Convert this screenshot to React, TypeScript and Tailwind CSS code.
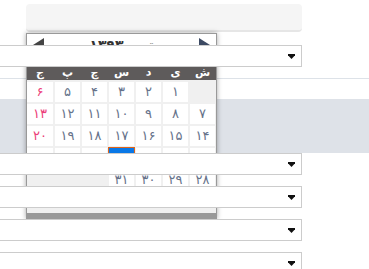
import React from 'react';

const fa = (n: number) => String(n).replace(/\d/g, (d) => '۰۱۲۳۴۵۶۷۸۹'[+d]);

// left to right: جمعه ... شنبه
const dayNames = ['ج', 'پ', 'چ', 'س', 'د', 'ی', 'ش'];

function Caret() {
  return (
    <svg width="7" height="5" viewBox="0 0 7 5" className="shrink-0">
      <path d="M0 0h7v1.2L3.5 5 0 1.2z" fill="#111" />
    </svg>
  );
}

function SelectBox({ className = '' }: { className?: string }) {
  return (
    <div
      className={`relative z-20 ml-[-4px] flex h-[22px] w-[306px] items-center justify-end border border-[#ccc] bg-white pr-[6px] ${className}`}
    >
      <Caret />
    </div>
  );
}

function DatePicker() {
  const weeks = [0, 1, 2, 3, 4, 5];
  return (
    <div className="absolute left-[26px] top-[33px] z-10 w-[191px] border border-b-[6px] border-[#999] bg-white shadow-[0_0_5px_rgba(0,0,0,0.35)]">
      {/* سربرگ ماه */}
      <div className="h-[30px]">
        <div className="flex h-[22px] items-center justify-between px-[6px]">
          <svg width="11" height="14" viewBox="0 0 11 14">
            <path d="M11 0v14L0 7z" fill="#444" />
          </svg>
          <div dir="rtl" className="flex items-center gap-[14px] text-[14px]">
            <span className="text-[#999]">تیر</span>
            <span className="font-bold tracking-[1px] text-[#333]">{fa(1393)}</span>
          </div>
          <svg width="11" height="14" viewBox="0 0 11 14">
            <path d="M0 0v14l11-7z" fill="#3d4a63" />
          </svg>
        </div>
      </div>

      {/* روزهای هفته */}
      <div className="grid h-[16px] grid-cols-[26px_repeat(6,25px)] gap-x-[2px] bg-[#5e5b5b] pr-px">
        {dayNames.map((d) => (
          <div key={d} className="flex items-center justify-center text-[11px] font-bold leading-none text-white">
            {d}
          </div>
        ))}
      </div>

      {/* روزها */}
      <div className="grid auto-rows-[20px] grid-cols-[26px_repeat(6,25px)] gap-[2px] bg-[#f0f0f0] pb-px pr-px pt-[2px]">
        {weeks.map((w) =>
          dayNames.map((_, c) => {
            const day = w * 7 + (6 - c);
            if (day < 1 || day > 31) return <div key={`${w}-${c}`} />;
            if (day === 24)
              return (
                <div
                  key={`${w}-${c}`}
                  className="flex items-center justify-center bg-[#0a78e6] text-[13px] text-white outline outline-1 outline-[#e0651a]"
                >
                  {fa(day)}
                </div>
              );
            return (
              <div
                key={`${w}-${c}`}
                className={`flex items-center justify-center bg-white text-[13px] ${
                  c === 0 ? 'text-[#ec407a]' : 'text-[#66728a]'
                }`}
              >
                {fa(day)}
              </div>
            );
          })
        )}
      </div>
    </div>
  );
}

export default function App() {
  return (
    <div
      className="relative h-[269px] w-[369px] overflow-hidden bg-white"
      style={{ fontFamily: '"DejaVu Sans", sans-serif' }}
    >
      <div className="ml-[26px] mt-[4px] h-[28px] w-[276px] rounded-[4px] border-b-2 border-[#e6e6e6] bg-[#f5f5f5]" />

      <SelectBox className="mt-[13px]" />

      <div className="mt-[11px] h-px bg-[#dde2e8]" />
      <div className="mt-[20px] h-[54px] bg-[#dee2e8]" />

      <SelectBox />
      <SelectBox className="mt-[11px]" />
      <SelectBox className="mt-[11px]" />
      <SelectBox className="mt-[11px]" />

      <DatePicker />
    </div>
  );
}
